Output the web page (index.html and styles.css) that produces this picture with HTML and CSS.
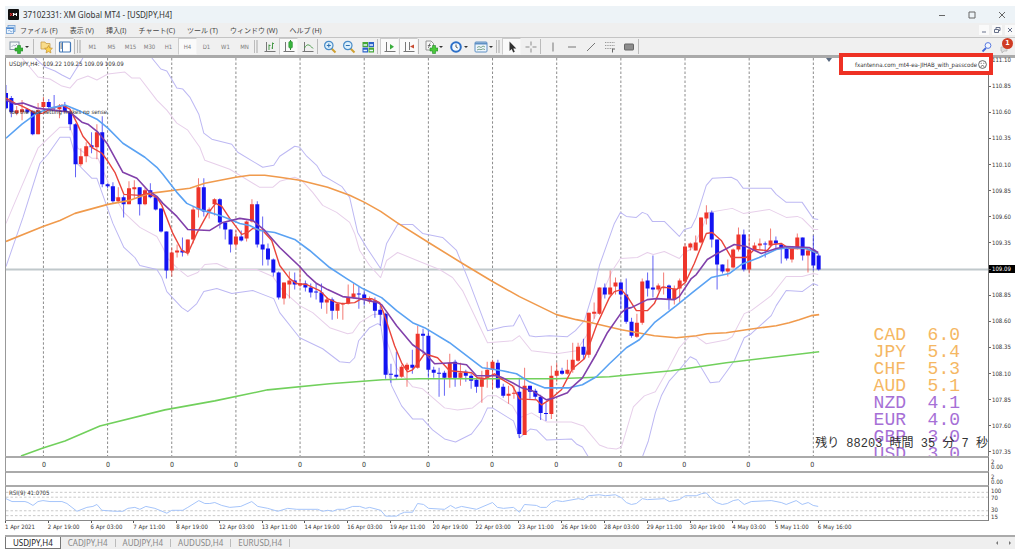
FILE: index.html
```html
<!DOCTYPE html>
<html lang="ja">
<head>
<meta charset="utf-8">
<title>37102331: XM Global MT4 - [USDJPY,H4]</title>
<link rel="stylesheet" href="styles.css">
</head>
<body>
<div class="window">
  <header class="titlebar">
    <svg class="app-logo" viewBox="0 0 11 11"><rect width="11" height="11" rx="1" fill="#111"/><path d="M2 4l2.500 3M4.500 4L2 7" stroke="#e33" stroke-width="1"/><path d="M5.500 7V4l1.500 2L8.500 4v3" stroke="#fff" stroke-width="1" fill="none"/></svg>
    <h1 class="title">37102331: XM Global MT4 - [USDJPY,H4]</h1>
    <div class="win-controls">
      <button aria-label="最小化"><svg viewBox="0 0 8 8"><path d="M1 4.500h6"/></svg></button>
      <button aria-label="最大化"><svg viewBox="0 0 8 8"><path d="M1 1h6v6H1z"/></svg></button>
      <button aria-label="閉じる"><svg viewBox="0 0 8 8"><path d="M1 1l6 6M7 1L1 7"/></svg></button>
    </div>
  </header>

  <nav class="menubar">
    <svg class="doc-icon" viewBox="0 0 10 10"><rect x="2" y=".5" width="7" height="6" fill="#cfe4fa" stroke="#6c9bd0" stroke-width=".8"/><rect x=".5" y="2.500" width="7" height="6" fill="#eaf4ff" stroke="#6c9bd0" stroke-width=".8"/><path d="M.5 3.500h7" stroke="#4a86d0"/><path d="M2 6l1.500-1L5 7l1.500-1" fill="none" stroke="#6c9bd0" stroke-width=".7"/></svg>
    <button>ファイル (F)</button>
    <button>表示 (V)</button>
    <button>挿入(I)</button>
    <button>チャート(C)</button>
    <button>ツール (T)</button>
    <button>ウィンドウ (W)</button>
    <button>ヘルプ (H)</button>
    <div class="mdi-controls">
      <button aria-label="子ウィンドウを最小化"><svg viewBox="0 0 8 8"><path d="M2 6h4"/></svg></button>
      <button aria-label="子ウィンドウを元に戻す"><svg viewBox="0 0 8 8"><path d="M3 3V1.500h4V4.500H5.500M1.500 3.500h4v3h-4z"/></svg></button>
      <button aria-label="子ウィンドウを閉じる"><svg viewBox="0 0 8 8"><path d="M2 2l4 4M6 2L2 6"/></svg></button>
    </div>
  </nav>

  <div class="toolbar">
    <button class="wide first" aria-label="新規チャート"><svg viewBox="0 0 14 14"><rect x="1" y="2" width="9" height="7.500" fill="#f4f8fb" stroke="#8294a5"/><path d="M2.500 7l2-2 1.500 1 2-2" fill="none" stroke="#8294a5" stroke-width=".7"/><path d="M8.500 5.500h3v2.500H14v3h-2.500v2.500h-3V11H6V8h2.500z" fill="#35b534" stroke="#1f8a28" stroke-width=".6"/></svg><i class="caret"></i></button>
    <span class="sep"></span>
    <button aria-label="お気に入り"><svg viewBox="0 0 14 14"><path d="M2 2h4l1 1.500h4V9H2z" fill="#f8dc8a" stroke="#c9a04a" stroke-width=".8"/><path d="M9.500 5.500l1.200 2.400 2.700.4-2 1.900.5 2.700-2.400-1.300-2.400 1.300.5-2.700-2-1.900 2.700-.4z" fill="#fcd24e" stroke="#c08c30" stroke-width=".7"/></svg></button>
    <button class="on" aria-label="ナビゲーター"><svg viewBox="0 0 14 14"><rect x="1.500" y="2" width="11" height="10" rx="1" fill="#fff" stroke="#4378b8" stroke-width="1.200"/><path d="M4.500 2v10" stroke="#4378b8"/><path d="M2.500 4h1.500M2.500 6h1.500M2.500 8h1.500" stroke="#333" stroke-width=".8"/></svg></button>
    <span class="sep"></span><span class="grip"></span>
    <button>M1</button><button>M5</button><button>M15</button><button>M30</button><button>H1</button><button class="on">H4</button><button>D1</button><button>W1</button><button>MN</button>
    <span class="grip"></span>
    <button aria-label="バーチャート"><svg viewBox="0 0 14 14"><path d="M3.500 2v10M1.500 11.500h11" stroke="#777" fill="none"/><path d="M6 10V4.500M6 5.500h1.500M9.500 9V2.500M8.500 8h1M9.500 3.500H11" stroke="#4a9a4a" fill="none"/></svg></button>
    <button class="on" aria-label="ローソク足"><svg viewBox="0 0 14 14"><path d="M3.500 2v10M1.500 11.500h11" stroke="#777" fill="none"/><path d="M8.500 0v10" stroke="#2f8f35"/><rect x="6.800" y="1.500" width="3.600" height="6.500" rx="1" fill="#38b53e" stroke="#2f8f35" stroke-width=".6"/></svg></button>
    <button aria-label="ラインチャート"><svg viewBox="0 0 14 14"><path d="M3.500 2v10M1.500 11.500h11" stroke="#777" fill="none"/><path d="M3.500 8C6 3.500 8 4 12 8.500" stroke="#4a9a4a" fill="none"/></svg></button>
    <span class="sep"></span>
    <button aria-label="ズームイン"><svg viewBox="0 0 14 14"><path d="M8.500 8.500l4 4" stroke="#d0a030" stroke-width="2"/><circle cx="5.800" cy="5.500" r="4.200" fill="#dcf0fc" stroke="#4a8cc8" stroke-width="1.200"/><path d="M3.800 5.500h4M5.800 3.500v4" stroke="#2f6fb0"/></svg></button>
    <button aria-label="ズームアウト"><svg viewBox="0 0 14 14"><path d="M8.500 8.500l4 4" stroke="#d0a030" stroke-width="2"/><circle cx="5.800" cy="5.500" r="4.200" fill="#dcf0fc" stroke="#4a8cc8" stroke-width="1.200"/><path d="M3.800 5.500h4" stroke="#2f6fb0"/></svg></button>
    <button aria-label="ウィンドウの整列"><svg viewBox="0 0 14 14"><rect x="1.500" y="2" width="5.500" height="5" fill="#46a838"/><rect x="7.500" y="2" width="5.500" height="5" fill="#2b62c8"/><rect x="1.500" y="7.500" width="5.500" height="5" fill="#2b62c8"/><rect x="7.500" y="7.500" width="5.500" height="5" fill="#46a838"/><path d="M2.500 5h3.500M8.500 5H12M2.500 10.500h3.500M8.500 10.500H12" stroke="#eaf5ff" stroke-width="1.600"/></svg></button>
    <span class="sep"></span>
    <button class="on" aria-label="自動スクロール"><svg viewBox="0 0 14 14"><path d="M3.500 2v10M1.500 11.500h11" stroke="#777" fill="none"/><path d="M7 4l4 2.700L7 9.500z" fill="#39ad3c"/></svg></button>
    <button class="on" aria-label="チャートシフト"><svg viewBox="0 0 14 14"><path d="M3.500 2v10M1.500 11.500h11M7.500 2v8" stroke="#777" fill="none"/><path d="M12 4.500v4L8 6.500z" fill="#c84a30"/></svg></button>
    <span class="sep"></span>
    <button class="wide" aria-label="インディケータ"><svg viewBox="0 0 14 14"><path d="M2 1h5l2.500 2.500V10H2z" fill="#f6f6f6" stroke="#8a8a8a" stroke-width=".9"/><path d="M4 8c1.500 0 1-5 2.500-5M3.800 5.500h3" stroke="#555" fill="none" stroke-width=".8"/><path d="M8.500 5.500h3v2.500H14v3h-2.500v2.500h-3V11H6V8h2.500z" fill="#4cc83a" stroke="#1f8a28" stroke-width=".6"/></svg><i class="caret"></i></button>
    <button class="wide" aria-label="時間軸"><svg viewBox="0 0 14 14"><circle cx="7" cy="7" r="4.800" fill="#f4faff" stroke="#2d70c8" stroke-width="2"/><path d="M7 4.500V7l1.800 1" stroke="#444" fill="none" stroke-width=".9"/></svg><i class="caret"></i></button>
    <button class="wide" aria-label="テンプレート"><svg viewBox="0 0 14 14"><rect x="1" y="2" width="12" height="10" rx="1" fill="#eef6fd" stroke="#5f90c4"/><path d="M1 3.500h12" stroke="#5f90c4" stroke-width="2"/><path d="M3 7.500l2-1 2 1 2-1.500 2 1M3 10l2-.8 2 .5 2-.9 2 .8" stroke="#5f8f70" fill="none" stroke-width=".8"/></svg><i class="caret"></i></button>
    <span class="grip"></span>
    <button class="on" aria-label="カーソル"><svg viewBox="0 0 14 14"><path d="M4.500 1.500v9.500l2.200-2 1.500 3.500 1.600-.7-1.500-3.300h3z" fill="#333"/></svg></button>
    <button aria-label="十字カーソル"><svg viewBox="0 0 14 14"><path d="M7 1.500v4M7 8.500v4M1.500 7h4M8.500 7h4" stroke="#8a8a8a"/></svg></button>
    <span class="sep"></span>
    <button aria-label="垂直線"><svg viewBox="0 0 14 14"><path d="M7 2.500v9" stroke="#777"/></svg></button>
    <button aria-label="水平線"><svg viewBox="0 0 14 14"><path d="M3 7h8" stroke="#777"/></svg></button>
    <button aria-label="トレンドライン"><svg viewBox="0 0 14 14"><path d="M3 11l8-8" stroke="#777"/></svg></button>
    <button aria-label="フィボナッチ"><svg viewBox="0 0 14 14"><path d="M2 2.500h10M2 5.500h10M2 8.500h8" stroke="#999" stroke-dasharray="1 .7"/><path d="M9.500 12.500v-3.500h2.500" stroke="#666" fill="none"/></svg></button>
    <button aria-label="四角形"><svg viewBox="0 0 14 14"><rect x="2.500" y="4" width="9" height="6" rx=".6" fill="#8d8d8d" stroke="#666"/></svg></button>
    <span class="sep"></span>
    <div class="toolbar-end">
      <button aria-label="検索"><svg viewBox="0 0 14 14"><path d="M6 8l-3.500 3.500" stroke="#4468d8" stroke-width="1.800"/><circle cx="8" cy="5.500" r="2.900" fill="#f2f6ff" stroke="#5a7ae0"/></svg></button>
      <button class="notice" aria-label="通知 1件"><svg viewBox="0 0 14 14"><path d="M2 7h6v4H5l-2 2v-2H2z" fill="#ddd" stroke="#aaa" stroke-width=".6"/></svg><b class="badge">1</b></button>
    </div>
  </div>

  <main class="workspace">
    <section class="plot" aria-label="USDJPY,H4">
      <svg class="chart" id="price" viewBox="6 58 983 397" preserveAspectRatio="none"></svg>
      <p class="ohlc">USDJPY,H4:  109.22 109.25 109.09 109.09</p>
      <p class="warning">You the rate setting makes no sense.</p>
      <i class="shift-mark"></i>
      <ul class="strength">
        <li>CAD  6.0</li><li>JPY  5.4</li><li>CHF  5.3</li><li>AUD  5.1</li>
        <li class="weak">NZD  4.1</li><li class="weak">EUR  4.0</li><li class="weak">GBP  3.0</li><li class="weak">USD  3.0</li>
      </ul>
      <p class="countdown">残り 88203 時間 35 分 7 秒</p>
    </section>
    <ol class="prices">
      <li>111.10</li><li>110.85</li><li>110.60</li><li>110.35</li><li>110.10</li><li>109.85</li><li>109.60</li><li>109.35</li><li class="now">109.09</li><li>108.85</li><li>108.60</li><li>108.35</li><li>108.10</li><li>107.85</li><li>107.60</li><li>107.35</li>
    </ol>
    <div class="expert"><span>fxantenna.com_mt4-ea-JIHAB_with_passcode</span><svg viewBox="0 0 9 9"><circle cx="4.500" cy="4.500" r="3.900"/><path d="M2.700 3.300h1M5.300 3.300h1M2.700 6.500q1.800-2 3.600 0"/></svg></div>

    <div class="zeros"><span>0</span><span>0</span><span>0</span><span>0</span><span>0</span><span>0</span><span>0</span><span>0</span><span>0</span><span>0</span><span>0</span><span>0</span><span>0</span></div>
    <div class="scale tight"><span>2</span><span>0.00</span></div>
    <div class="empty"></div>
    <div class="scale tight"><span>2</span><span>0.00</span></div>

    <section class="rsi" aria-label="RSI">
      <svg class="chart" id="rsi" viewBox="6 486 983 34" preserveAspectRatio="none"></svg>
      <p class="rsi-label">RSI(9) 41.0705</p>
    </section>
    <div class="scale levels"><span>100</span><span>70</span><span class="low">30</span><span>15</span></div>

    <ol class="times">
      <li>1 Apr 2021</li><li>2 Apr 19:00</li><li>6 Apr 03:00</li><li>7 Apr 11:00</li><li>8 Apr 19:00</li><li>12 Apr 03:00</li><li>13 Apr 11:00</li><li>14 Apr 19:00</li><li>16 Apr 03:00</li><li>19 Apr 11:00</li><li>20 Apr 19:00</li><li>22 Apr 03:00</li><li>23 Apr 11:00</li><li>26 Apr 19:00</li><li>28 Apr 03:00</li><li>29 Apr 11:00</li><li>30 Apr 19:00</li><li>4 May 03:00</li><li>5 May 11:00</li><li>6 May 16:00</li>
    </ol>
  </main>

  <footer class="tabs">
    <button class="active">USDJPY,H4</button><button>CADJPY,H4</button><button>AUDJPY,H4</button><button>AUDUSD,H4</button><button>EURUSD,H4</button>
    <div class="tab-scroll"><button aria-label="前へ"><svg viewBox="0 0 6 6"><path d="M4 1v4L2 3z"/></svg></button><button aria-label="次へ"><svg viewBox="0 0 6 6"><path d="M2 1v4l2-2z"/></svg></button></div>
  </footer>
</div>
<script src="chart.js"></script>
</body>
</html>
```

FILE: styles.css
```css
* { box-sizing: border-box; }
body {
  margin: 0;
  background: #fff;
  color: #333;
  font-family: "DejaVu Sans Condensed", "DejaVu Sans", "Noto Sans CJK JP", sans-serif;
  font-size: 6px;
}
ul, ol, p, h1 { margin: 0; padding: 0; list-style: none; font-weight: normal; }
button { border: 0; padding: 0; background: none; color: inherit; font: inherit; }
svg { display: block; }

.window {
  display: flex;
  flex-direction: column;
  height: 100vh;
  min-height: 400px;
  padding: 6px 9px 5px 5px;
}

.titlebar {
  display: flex;
  align-items: center;
  gap: 4px;
  height: 17px;
  padding-left: 3px;
  background: #edf3f7;
}
.app-logo { width: 11px; height: 11px; }
.title { font: 8px "Noto Sans", sans-serif; color: #333; }
.win-controls { display: flex; gap: 22px; margin-left: auto; padding-right: 9px; }
.win-controls svg { width: 8px; height: 8px; fill: none; stroke: #666; stroke-width: 1; }

.menubar {
  display: flex;
  align-items: center;
  gap: 12px;
  height: 14px;
  background: #efefef;
  font: 7px "Noto Sans", "Noto Sans CJK JP", sans-serif;
  color: #444;
}
.doc-icon { width: 10px; height: 10px; margin: 0 -8px 0 1px; }
.mdi-controls { display: flex; gap: 3px; margin-left: auto; }
.mdi-controls button { padding: 1px; background: #fafafa; }
.mdi-controls svg { width: 8px; height: 8px; fill: none; stroke: #66708a; stroke-width: 1; }

.toolbar {
  display: flex;
  align-items: stretch;
  height: 18px;
  border-top: 1px solid #c4c4c4;
  background: #f0f0f0;
  color: #7c7c7c;
}
.toolbar button { display: flex; align-items: center; justify-content: center; width: 19px; }
.toolbar button svg { width: 14px; height: 14px; }
.toolbar .wide { width: 25px; gap: 1px; }
.toolbar .first { width: 28px; gap: 2px; }
.toolbar .on { background: #fafafa; border: 1px solid #ccc; border-right-color: #f4f4f4; border-bottom-color: #f4f4f4; }
.caret { border: 2px solid transparent; border-top-color: #333; border-bottom: 0; }
.sep { width: 3px; margin: 1px 0; border-left: 1px solid #bbb; }
.grip { width: 6px; margin: 2px 0; border-left: 1px solid #bbb; background: linear-gradient(90deg, transparent 1px, #ccc 1px, #ccc 3px, transparent 3px); }
.toolbar-end { display: flex; margin-left: auto; }
.toolbar .notice { position: relative; }
.badge {
  position: absolute;
  top: 0;
  right: 2px;
  width: 11px;
  height: 11px;
  border-radius: 50%;
  background: #cf3c24;
  color: #fff;
  font-size: 7px;
  line-height: 11px;
  text-align: center;
}

.workspace {
  position: relative;
  flex: 1;
  display: grid;
  grid-template-columns: minmax(0, 1fr) 26px;
  grid-template-rows: minmax(0, 1fr) 15px 14px 36px 14px;
  border-top: 3px solid #aaa;
  border-bottom: 2px solid #aaa;
}
.plot, .zeros, .empty, .rsi { border-left: 1px solid #999; border-right: 1px solid #777; }
.plot { position: relative; overflow: hidden; }
.chart { width: 100%; height: 100%; }
.chart polyline { fill: none; stroke-linejoin: round; }
.divider { stroke: #8c8c8c; stroke-width: 1; stroke-dasharray: 2.500 2; }
.quote { stroke: #c0c8cb; stroke-width: 2; }
.level { stroke: #c8c8c8; stroke-dasharray: 2.500 2; }
.up { stroke: #ee352b; }
.down { stroke: #1313f2; }
.wick { stroke-width: 1; opacity: .65; }
.body { stroke-width: 4; }
.outer { stroke: #bdb8f3; stroke-width: 1; }
.inner { stroke: #e7cfea; stroke-width: 1; }
.long { stroke: #f09a4c; stroke-width: 1.600; }
.base { stroke: #71d05c; stroke-width: 1.600; }
.mid { stroke: #5aa2f3; stroke-width: 1.600; }
.slow { stroke: #8140aa; stroke-width: 1.600; }
.fast { stroke: #ea453b; stroke-width: 1.400; }
.momentum { stroke: #a4c3fa; stroke-width: 1; }

.ohlc, .warning { position: absolute; left: 3px; line-height: 8px; white-space: pre; }
.ohlc { top: 2px; }
.warning { top: 50px; }
.shift-mark { position: absolute; top: 0; left: 83.500%; border: 3px solid transparent; border-top: 4px solid #5a6a80; border-bottom: 0; }
.strength {
  position: absolute;
  right: 28px;
  bottom: -7px;
  font: 18px/17px "Liberation Mono", monospace;
  color: #f5b763;
}
.strength li { white-space: pre; }
.strength .weak { color: #a66fd6; }
.countdown {
  position: absolute;
  right: 0;
  bottom: 4px;
  font: 12px/16px "Liberation Mono", "Noto Sans CJK JP", monospace;
  white-space: pre;
}

.prices { display: flex; flex-direction: column; justify-content: space-between; margin: -2px 0 0; line-height: 8px; }
.prices li { display: flex; align-items: center; gap: 1px; }
.prices li::before { content: ""; width: 2px; border-top: 1px solid #666; }
.prices .now { background: #000; color: #fff; }

.expert {
  position: absolute;
  top: -5px;
  right: 22px;
  display: flex;
  align-items: center;
  justify-content: flex-end;
  gap: 1px;
  width: 154px;
  height: 22px;
  padding-right: 2px;
  border: 4px solid #ee3124;
  background: #fff;
  white-space: nowrap;
}
.expert svg { width: 9px; height: 9px; fill: none; stroke: #444; stroke-width: .8; }

.zeros, .empty, .rsi { border-top: 2px solid #aaa; }
.zeros { display: flex; align-items: center; padding-left: 6px; font-size: 7px; }
.zeros span { flex: 0 0 6.560%; text-align: center; }
.scale { display: flex; flex-direction: column; padding: 2px 0 0 2px; line-height: 7px; }
.tight span { margin-bottom: -2px; }
.rsi { position: relative; border-bottom: 1px solid #888; }
.rsi-label { position: absolute; top: 2px; left: 3px; line-height: 8px; }
.levels .low { margin-top: 5px; }
.times { display: grid; grid-template-columns: repeat(23, minmax(0, 1fr)); line-height: 12px; white-space: nowrap; }
.times li { position: relative; }
.times li::before { content: ""; position: absolute; top: 0; left: 0; height: 2px; border-left: 1px solid #555; }

.tabs { display: flex; height: 12px; background: #efefef; color: #888; font: 8px/11px "Noto Sans", sans-serif; }
.tabs > button { padding: 0 7px; border-right: 1px solid #bbb; line-height: 8px; margin: 2px 0; }
.tabs .active { margin: 0; padding: 0 7px; border: 1px solid #777; border-top: 0; background: #fff; color: #222; line-height: 11px; }
.tab-scroll { display: flex; gap: 7px; align-items: center; margin-left: auto; padding-right: 2px; }
.tab-scroll svg { width: 6px; height: 6px; fill: #777; }
```

FILE: chart.js
```js
const NS = "http://www.w3.org/2000/svg";
const ORIGIN = 6, STEP = 5.352;

// One candle per entry: direction, high, body top, body bottom, low.
const candles = `
d 85 93 108 109|d 96 98 112 117|u 106 110 113 115|u 100 109 112 120|d 108 109 112 113|d 110 111 134 135|u 103 110 134 134|u 97 102 107 109|d 99 102 107 110|d 95 107 108 111
u 104 106 109 118|d 102 106 111 112|d 110 112 124 130|d 123 124 164 177|u 148 156 164 166|u 142 146 156 162|d 132 145 147 153|u 124 132 147 159|d 116 132 184 187|d 183 184 186 188
d 182 186 201 203|u 187 197 201 203|d 195 197 204 217|u 181 188 204 204|u 180 187 189 198|d 187 187 204 215|u 188 190 204 205|d 183 190 197 198|d 196 197 209 210|d 208 208 231 232
d 231 231 270 278|u 247 252 270 276|u 244 250 252 257|d 237 250 252 256|u 239 239 252 255|u 206 209 239 243|u 178 187 209 217|d 178 187 211 216|u 207 209 211 218|u 198 199 204 215
d 198 199 222 228|d 221 222 229 239|d 229 229 244 252|u 230 236 244 247|d 230 236 240 241|u 220 221 238 241|u 199 204 221 222|d 201 204 244 247|d 216 244 249 265|d 243 248 259 265
d 258 259 272 276|d 271 272 297 299|u 282 282 298 304|u 271 280 284 298|d 272 280 284 289|u 267 283 285 287|d 280 283 287 291|d 283 287 292 297|d 283 291 292 299|d 283 292 302 308
u 297 299 302 313|d 297 299 310 319|u 302 303 310 318|u 302 303 304 319|u 284 297 303 304|u 283 293 297 298|d 286 293 294 308|d 290 294 298 305|u 296 298 301 303|d 297 300 310 317
d 305 309 314 325|d 312 313 374 378|d 363 373 374 382|d 351 374 376 379|u 364 366 376 377|u 362 364 369 386|d 349 364 367 373|u 325 333 367 368|d 328 333 335 353|d 329 335 369 377
d 366 369 372 377|d 367 372 373 396|d 370 372 377 395|u 353 362 377 387|d 359 361 377 386|u 362 372 377 385|d 369 371 375 381|d 373 375 380 388|d 377 379 386 392|u 370 377 386 402
u 361 369 377 387|u 359 361 369 388|d 359 362 387 388|d 383 386 395 397|u 385 393 395 403|u 385 392 393 398|d 377 391 433 437|u 367 385 434 434|d 385 385 391 398|d 388 390 396 399
d 394 396 412 419|d 402 412 413 420|u 365 375 413 418|u 362 370 375 381|d 367 370 373 374|u 359 369 373 374|u 342 359 369 372|u 342 346 360 361|d 338 346 354 359|u 312 312 354 357
u 302 311 313 318|u 287 287 313 314|d 283 287 294 298|u 270 287 294 297|u 277 282 286 294|d 281 282 294 308|d 278 294 321 323|d 317 321 335 337|u 313 322 336 337|u 278 281 322 324
d 272 280 288 296|d 255 287 289 297|u 283 285 289 291|u 272 286 287 294|d 284 285 299 309|u 285 288 299 304|u 278 280 288 302|u 243 246 281 282|u 242 243 247 250|u 235 242 250 250
u 217 217 242 243|u 205 212 218 224|d 210 212 239 247|d 239 239 264 289|d 264 264 271 273|u 259 268 271 276|u 248 249 267 268|u 227 234 249 251|d 229 234 269 271|u 234 249 269 273
u 242 245 249 250|u 238 243 245 249|d 241 243 244 257|u 228 240 245 246|d 236 240 243 249|d 243 244 247 263|d 247 248 258 260|u 246 247 259 262|u 233 237 248 249|d 237 237 255 260
u 249 250 255 272|d 235 249 265 270|d 253 255 269 270`.trim().split(/[|\n]/).map(row => row.split(" "));

const lines = [
  ["outer", "35,58 45,67 55,71 62,75 70,79 80,63 83,58"],
  ["outer", "152,58 161,69 167,71 177,88 183,89 190,97 199,114 204,133 212,139 232,144 238,152 263,167 274,165 280,156 295,146 300,147 307,156 317,165 323,175 342,186 350,197 358,232 367,247 381,268 387,243 398,224 413,224 423,233 443,237 457,250 470,282 488,330 504,326 514,325 520,314 530,335 536,336 550,335 568,336 576,330 585,320 595,287 600,265 615,223 621,212 627,216 637,217 643,212 648,214 653,221 665,221 680,236 685,229 692,227 697,217 707,185 713,178 732,177 738,180 744,188 772,188 777,194 787,202 803,202 814,218 819,219"],
  ["outer", "6,266 23,217 40,163 48,154 60,137 70,137 78,164 92,178 97,178 113,223 124,247 135,257 140,265 157,269 162,277 167,291 182,307 188,311 197,303 204,291 217,288 232,293 253,290 274,298 280,312 300,337 323,348 340,361 350,362 355,357 359,340 370,327 378,323 381,324 387,363 392,385 402,405 413,418 423,418 433,429 445,438 456,441 472,433 482,420 488,407 493,407 514,420 520,437 531,428 537,429 547,439 572,438 577,443 583,446 589,456"],
  ["outer", "643,456 649,440 656,412 662,395 670,380 680,369 691,356 697,359 702,367 711,382 720,381 728,370 735,360 745,337 752,333 762,324 772,315 777,305 787,290 803,291 814,283 819,285"],
  ["inner", "22,58 28,65 38,77 50,79 62,86 70,88 77,80 88,76 97,80 108,74 125,72 132,78 140,78 157,100 167,110 177,123 188,130 200,147 205,160 230,169 260,187 273,187 280,181 295,177 302,180 313,192 323,205 337,212 350,222 355,233 360,250 370,265 381,277 387,260 398,252 420,261 440,269 453,277 463,290 488,342 513,340 520,335 532,350 557,353 577,350 587,335 597,313 605,288 613,270 621,258 638,257 648,252 654,254 665,251 680,258 685,252 693,248 702,230 709,212 733,208 744,213 770,209 787,217 798,216 803,218 814,229 819,229"],
  ["inner", "6,223 17,197 38,148 60,127 70,127 78,148 92,158 98,158 113,193 124,212 140,227 157,236 163,247 168,258 178,268 188,276 198,272 205,264 217,263 230,269 257,269 273,276 283,290 300,305 313,312 330,327 348,333 353,332 360,322 373,314 381,313 387,340 397,367 413,386 423,388 445,407 458,409 473,407 488,395 497,395 513,405 520,417 532,412 547,421 572,421 584,425 600,444 608,447 617,448 622,446 626,433 634,406 645,395 656,391 668,370 680,347 690,336 697,336 707,343 728,339 733,336 745,313 752,310 772,295 787,276 803,276 814,273 819,274"],
  ["base", "21,455 43,447 65,440 100,425 165,409 215,400 268,389 330,383 383,379 420,378 500,378 557,378 610,376 672,370 727,362 820,351"],
  ["long", "6,241 43,226 60,220 75,213 108,204 130,200 150,193 190,188 205,183 236,177 250,175 265,175 280,177 300,180 328,187 350,195 365,202 381,211 397,222 429,242 463,263 493,281 520,296 557,314 577,319 592,322 622,329 655,335 677,337 697,335 708,333 727,332 747,329 777,325 790,322 800,319 812,315 820,314"],
  ["fast", "6,98 15,103 22,106 28,109 37,114 43,113 50,109 62,105 70,109 77,123 83,136 93,148 102,153 108,161 115,172 124,194 140,195 148,193 157,197 162,205 173,233 182,250 188,253 197,233 208,213 216,203 222,206 230,218 242,234 248,232 253,228 263,230 272,240 280,265 290,278 297,283 307,284 320,290 328,298 337,302 343,303 355,302 362,298 372,298 380,302 384,312 395,345 402,362 408,371 413,369 418,363 425,353 438,357 450,370 472,372 478,377 485,378 495,373 500,377 513,385 520,398 537,399 542,404 550,399 562,389 573,368 585,358 597,325 610,297 615,291 622,289 628,296 637,310 648,310 655,303 662,287 668,287 677,289 686,282 695,263 707,233 713,232 722,240 732,257 747,257 755,249 768,250 773,244 782,243 790,248 807,248 819,253"],
  ["mid", "6,138 22,124 37,113 50,108 65,105 78,110 97,119 108,128 123,143 145,157 157,167 163,174 177,192 187,203 200,209 223,216 240,223 250,225 260,230 275,232 295,239 310,250 330,267 347,278 363,288 382,297 397,310 413,322 425,327 450,342 483,367 503,370 517,373 530,381 545,387 570,387 583,384 597,376 610,363 627,347 640,339 655,322 677,305 693,292 712,277 730,273 742,264 760,257 777,249 790,247 807,248 819,253"],
  ["slow", "6,100 15,104 23,103 37,108 53,110 70,112 82,122 88,124 98,132 107,143 123,172 137,178 148,190 157,196 163,203 177,216 188,229 210,230 215,227 223,222 240,218 253,220 265,230 280,247 300,266 307,274 317,283 328,289 343,296 360,298 378,302 382,304 397,325 413,344 425,352 435,363 453,362 467,364 477,375 498,375 503,377 513,382 522,387 533,390 547,399 555,397 568,392 573,386 583,377 597,353 608,332 622,312 627,308 632,307 648,299 657,298 675,299 680,296 692,278 697,274 708,259 718,253 735,244 747,246 762,253 777,248 787,246 810,247 819,252"]
];

const rsiPoints = "6,498 12,501 25,501 28,502 33,505 38,501 43,500 50,501 62,501 67,503 77,511 87,507 93,506 97,504 102,510 115,511 123,511 128,508 135,507 140,509 146,506 155,508 167,513 172,510 183,510 188,507 199,500 205,503 210,503 215,502 222,505 230,507 241,506 252,501 258,506 268,508 278,511 288,508 297,509 318,509 323,511 328,510 333,511 338,509 345,509 353,506 360,506 366,508 370,507 381,510 386,516 397,516 400,514 405,512 413,512 418,503 424,504 429,508 445,509 451,505 456,508 462,506 477,509 493,502 498,507 504,508 514,507 520,512 525,504 537,505 541,507 547,507 552,502 557,500 563,501 579,498 584,499 589,495 600,494 606,495 616,494 622,497 627,502 632,504 637,503 643,498 648,499 665,498 670,501 680,499 686,495 697,495 702,493 707,492 712,498 717,502 723,504 728,503 734,500 739,499 745,504 752,501 772,500 782,502 787,504 797,500 803,504 809,502 814,505 819,506";

function add(parent, tag, attrs) {
  const el = document.createElementNS(NS, tag);
  for (const name in attrs) el.setAttribute(name, attrs[name]);
  parent.appendChild(el);
}

const price = document.getElementById("price");
for (let i = 7; i < 153; i += 12) {
  const x = (ORIGIN + i * STEP).toFixed(2);
  add(price, "path", { class: "divider", d: `M${x} 58V455` });
}
add(price, "path", { class: "quote", d: "M6 269H989" });
lines.slice(0, 6).forEach(([name, points]) => add(price, "polyline", { class: name, points }));
for (const [key, name] of [["u", "up"], ["d", "down"]]) {
  let wicks = "", bodies = "";
  candles.forEach(([dir, high, top, bottom, low], i) => {
    if (dir !== key) return;
    const x = (ORIGIN + i * STEP).toFixed(2);
    wicks += `M${x} ${high}V${low}`;
    bodies += `M${x} ${top}V${bottom}`;
  });
  add(price, "path", { class: `wick ${name}`, d: wicks });
  add(price, "path", { class: `body ${name}`, d: bodies });
}
lines.slice(6).forEach(([name, points]) => add(price, "polyline", { class: name, points }));

const rsi = document.getElementById("rsi");
for (const y of [491, 496, 510, 515]) add(rsi, "path", { class: "level", d: `M6 ${y}.5H989` });
add(rsi, "polyline", { class: "momentum", points: rsiPoints });
```
